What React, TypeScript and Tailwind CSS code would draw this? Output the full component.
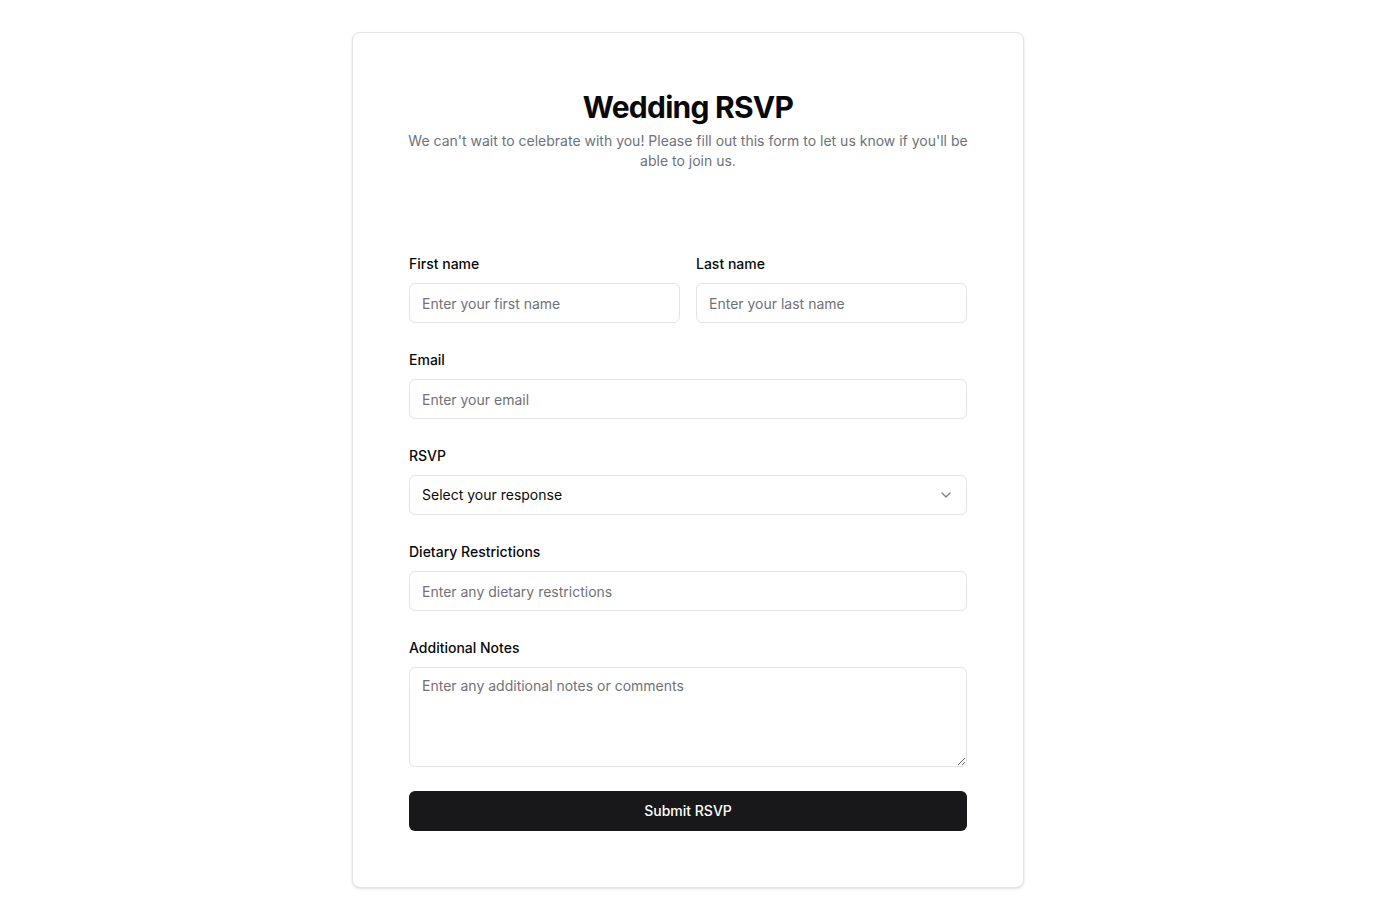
import React from "react";

const inputCls =
  "h-10 w-full rounded-md border border-[#e4e4e7] bg-white px-3 text-sm text-[#09090b] placeholder:text-[#71717a] outline-none";

function Field({ label, children }: { label: string; children: React.ReactNode }) {
  return (
    <div className="flex flex-col">
      <label className="h-5 text-sm font-medium leading-5 text-[#09090b]">{label}</label>
      <div className="mt-[9px]">{children}</div>
    </div>
  );
}

export default function App() {
  return (
    <div
      className="min-h-[920px] w-full bg-white"
      style={{ fontFamily: "Inter, 'Noto Sans', sans-serif" }}
    >
      <div className="mx-auto pt-8 w-[672px]">
        <div className="rounded-lg border border-[#e4e4e7] bg-white px-14 pt-14 pb-14 shadow-sm">
          <div className="text-center">
            <h1 className="text-3xl font-bold leading-9 tracking-tight text-[#09090b]">Wedding RSVP</h1>
            <p className="-mx-2 mt-[6px] text-sm leading-5 text-[#6b7280]">
              We can't wait to celebrate with you! Please fill out this form to let us know if you'll be able to join us.
            </p>
          </div>
          <form className="mt-[83px] flex flex-col gap-[27px]" onSubmit={(e) => e.preventDefault()}>
            <div className="grid grid-cols-2 gap-4">
              <Field label="First name">
                <input className={inputCls} placeholder="Enter your first name" />
              </Field>
              <Field label="Last name">
                <input className={inputCls} placeholder="Enter your last name" />
              </Field>
            </div>
            <Field label="Email">
              <input className={inputCls} placeholder="Enter your email" />
            </Field>
            <Field label="RSVP">
              <button
                type="button"
                className="flex h-10 w-full items-center justify-between rounded-md border border-[#e4e4e7] bg-white px-3 text-sm text-[#09090b]"
              >
                <span>Select your response</span>
                <svg
                  width="16"
                  height="16"
                  viewBox="0 0 24 24"
                  fill="none"
                  stroke="currentColor"
                  strokeWidth="2"
                  strokeLinecap="round"
                  strokeLinejoin="round"
                  className="opacity-50"
                >
                  <path d="m6 9 6 6 6-6" />
                </svg>
              </button>
            </Field>
            <Field label="Dietary Restrictions">
              <input className={inputCls} placeholder="Enter any dietary restrictions" />
            </Field>
            <div className="flex flex-col">
              <Field label="Additional Notes">
                <textarea
                  className="block h-[100px] w-full rounded-md border border-[#e4e4e7] bg-white px-3 py-2 text-sm leading-5 text-[#09090b] placeholder:text-[#71717a] outline-none"
                  placeholder="Enter any additional notes or comments"
                />
              </Field>
              <button
                type="submit"
                className="mt-6 h-10 w-full rounded-md bg-[#18181b] text-sm font-medium text-white"
              >
                Submit RSVP
              </button>
            </div>
          </form>
        </div>
      </div>
    </div>
  );
}
